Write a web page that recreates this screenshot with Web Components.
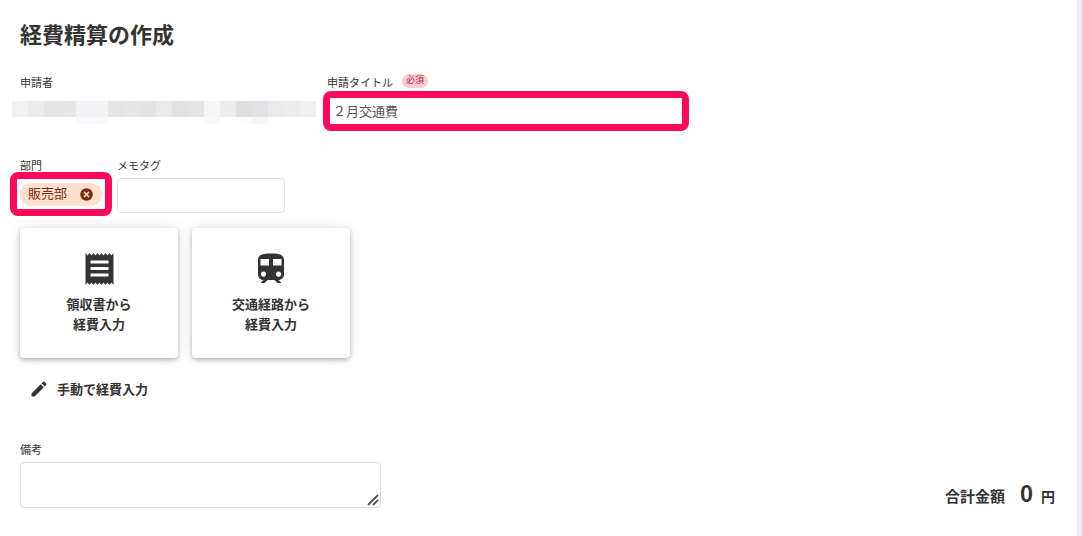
<!DOCTYPE html>
<html lang="ja">
<head>
<meta charset="utf-8">
<meta name="viewport" content="width=device-width, initial-scale=1">
<title>経費精算の作成</title>
<style>
  body { margin: 0; color: #333; background: #e8f1fd; font-family: "Noto Sans CJK JP", sans-serif; font-size: 13px; }
</style>
</head>
<body>
<expense-page></expense-page>
<script>
class BaseElement extends HTMLElement {
  constructor() {
    super();
    this.attachShadow({ mode: 'open' });
  }
  render(css, html) {
    this.shadowRoot.innerHTML = `<style>*{box-sizing:border-box}${css}</style>${html}`;
  }
}

const labelCss = `
  :host { display: flex; flex-direction: column; gap: 5px; min-width: 0; position: relative; }
  label, .label { font-size: 11px; line-height: 16px; white-space: nowrap; }
  .head { display: flex; gap: 9px; height: 16px; }
  input, textarea { display: block; width: 100%; margin: 0; font: inherit; font-size: 13px; color: #555;
    background: #fff; border: 1px solid #e5e4e0; border-radius: 4px; padding: 2px 5px 6px; outline: none; }
  input { height: 35px; }
  textarea { height: 46px; resize: both; border-color: #ddd; }
  textarea::-webkit-resizer { background: transparent; }
  .grip { position: absolute; right: 2px; bottom: 2px; pointer-events: none; }
`;

/* Rounded marker frame drawn over a control */
customElements.define('marker-frame', class extends BaseElement {
  connectedCallback() {
    this.render(`:host { display: block; position: absolute; border: 7px solid #ff0a5a; border-radius: 8px; pointer-events: none; box-sizing: border-box; }`, '');
  }
});

/* Text field with its label; attributes: label, value, required, multiline */
customElements.define('text-field', class extends BaseElement {
  connectedCallback() {
    const value = this.getAttribute('value') || '';
    const control = this.hasAttribute('multiline')
      ? '<textarea id="control"></textarea><svg class="grip" width="12" height="12" viewBox="0 0 12 12" fill="none" stroke="#555" stroke-width="1.8" aria-hidden="true"><path d="M1 11L11 1M6 11l5-5"/></svg>'
      : `<input id="control" type="text" value="${value}">`;
    this.render(labelCss + `
      .badge { align-self: flex-start; height: 14px; padding: 0 4px; border-radius: 7px; background: #f9cdd0; color: #a83246;
        font-size: 9px; line-height: 12px; }
    `, `<div class="head"><label for="control">${this.getAttribute('label')}</label>
      ${this.hasAttribute('required') ? '<span class="badge">必須</span>' : ''}</div>${control}<slot></slot>`);
  }
});

/* Applicant name, hidden behind a mosaic */
customElements.define('masked-name', class extends BaseElement {
  connectedCallback() {
    const top = ['f1f1ef','e9eceb','e5e5e5','e6e6e4','f1f2f6','f2f2f3','e2e5e4','e6e6e4','e4e3e1','e9e9ea','e1e1e2','e4e4e4','f4f7f6','eeecea','dfdfdf','e1e2e5','eaeaea','ececec','f0f0f0'];
    const low = { 4: 'f7f7f7', 5: 'f7f7f7', 12: 'f8f8f8', 14: 'fdfdfd', 15: 'f5f7f7' };
    const cells = top.map(c => `<i style="background:#${c}"></i>`).join('')
      + top.map((_, i) => `<i style="background:#${low[i] || 'fff'}"></i>`).join('');
    this.render(labelCss + `
      .mosaic { position: absolute; left: -8px; top: 27px; display: grid; grid-template-columns: repeat(19, 16px); grid-template-rows: 16px 7px; }
    `, `<div class="label">申請者</div><div class="mosaic" aria-hidden="true">${cells}</div>`);
  }
});

/* Selected department chip */
customElements.define('tag-field', class extends BaseElement {
  connectedCallback() {
    this.render(labelCss + `
      .control { display: flex; align-items: center; height: 35px; padding-bottom: 2px; }
      .chip { display: flex; flex: 1; align-items: center; justify-content: space-between; height: 23px; padding: 0 8px;
        border-radius: 12px; background: #ffe0d0; color: #7a2e0c; }
      .text { line-height: 20px; padding-bottom: 3px; }
      button { display: block; padding: 0; border: 0; background: none; color: inherit; }
      svg { display: block; }
    `, `<div class="label">部門</div>
      <div class="control"><span class="chip"><span class="text"><slot></slot></span>
        <button type="button" aria-label="削除"><svg width="15" height="15" viewBox="0 0 24 24"><path fill="currentColor" d="M12 2C6.47 2 2 6.47 2 12s4.47 10 10 10 10-4.47 10-10S17.53 2 12 2z"/><path d="M8 8l8 8M16 8l-8 8" stroke="#ffe0d0" stroke-width="2.6"/></svg></button>
      </span></div><slot name="marker"></slot>`);
  }
});

/* Large entry card: icon in a slot, two lines of caption */
customElements.define('entry-card', class extends BaseElement {
  connectedCallback() {
    this.render(`
      :host { display: block; }
      button { display: flex; flex-direction: column; align-items: center; justify-content: center; gap: 9px;
        width: 100%; height: 130px; padding: 0; border: 0; border-radius: 4px; background: #fff; color: #333;
        font: inherit; font-weight: 700; line-height: 20px; box-shadow: 0 2px 4px rgba(0,0,0,.26), 0 0 14px rgba(0,0,0,.1); }
    `, `<button type="button"><slot name="icon"></slot><span><slot></slot></span></button>`);
  }
});

customElements.define('manual-entry', class extends BaseElement {
  connectedCallback() {
    this.render(`
      :host { display: flex; }
      button { display: flex; align-items: center; gap: 8px; height: 32px; padding: 0 9px; border: 0; background: none; color: #333;
        font: inherit; font-weight: 700; line-height: 20px; }
    `, `<button type="button"><svg width="20" height="20" viewBox="0 0 24 24" fill="currentColor"><path d="M3 17.25V21h3.75L17.81 9.94l-3.75-3.75L3 17.25zM20.71 7.04a1 1 0 0 0 0-1.41l-2.34-2.34a1 1 0 0 0-1.41 0l-1.83 1.83 3.75 3.75 1.83-1.83z"/></svg><slot></slot></button>`);
  }
});

customElements.define('total-amount', class extends BaseElement {
  connectedCallback() {
    this.render(`
      :host { display: flex; align-items: baseline; font-weight: 700; font-size: 15px; line-height: 24px; white-space: nowrap; }
      .num { font-size: 22px; margin: 0 8px 0 15px; }
      .unit { font-size: 14px; }
    `, `<span>合計金額</span><span class="num"><slot></slot></span><span class="unit">円</span>`);
  }
});

customElements.define('expense-page', class extends BaseElement {
  connectedCallback() {
    this.render(`
      :host { display: block; padding-right: 5px; }
      main { min-height: 100vh; padding: 19px 22px 20px 20px; background: #fff; }
      h1 { margin: 0 0 27px; font-size: 22px; line-height: 28px; font-weight: 700; }
      .row { display: flex; gap: 15px; }
      .top { margin-bottom: 27px; }
      .name { flex: 0 1 292px; }
      .title { flex: 0 1 360px; }
      .dept { flex: 0 0 82px; }
      .memo { flex: 0 1 168px; }
      .title marker-frame { inset: 17px -2px -1px -4px; }
      .dept marker-frame { inset: 15px -10px -3px -10px; }
      .cards { gap: 14px; margin: 15px 0; }
      entry-card { flex: 0 1 158px; }
      manual-entry { margin-bottom: 36px; }
      .foot { justify-content: space-between; align-items: flex-end; }
      .note { flex: 0 1 361px; }
    `, `<main>
      <h1>経費精算の作成</h1>
      <div class="row top">
        <masked-name class="name"></masked-name>
        <text-field class="title" label="申請タイトル" value="２月交通費" required><marker-frame></marker-frame></text-field>
      </div>
      <div class="row">
        <tag-field class="dept">販売部<marker-frame slot="marker"></marker-frame></tag-field>
        <text-field class="memo" label="メモタグ"></text-field>
      </div>
      <div class="row cards">
        <entry-card><svg slot="icon" width="29" height="32" viewBox="0 0 28 32" fill="currentColor" fill-rule="evenodd"><path d="M0 0l2 2.500L4 0l2 2.500L8 0l2 2.500L12 0l2 2.500L16 0l2 2.500L20 0l2 2.500L24 0l2 2.500L28 0v32l-2-2.500L24 32l-2-2.500L20 32l-2-2.500L16 32l-2-2.500L12 32l-2-2.500L8 32l-2-2.500L4 32l-2-2.500L0 32zM5 7.500v3h18v-3zM5 14v3h18v-3zM5 20.500v3h18v-3z"/></svg>領収書から<br>経費入力</entry-card>
        <entry-card><svg slot="icon" width="26" height="32" viewBox="0 0 26 32" fill="currentColor" fill-rule="evenodd"><path d="M13 0.500C5 0.500 0 1.500 0 7V21.500c0 3 2.500 5.500 5.500 5.500L3 29.500v.5h3.500l3-3h7l3 3H23v-.5L20.500 27c3 0 5.500-2.500 5.500-5.500V7c0-5.500-5-6.500-13-6.500zM2.500 6H11v6.500H2.500zM15 6h8.500v6.500H15zM5.500 18.500a2.600 2.600 0 1 0 .01 0zM20.500 18.500a2.600 2.600 0 1 0 .01 0z"/></svg>交通経路から<br>経費入力</entry-card>
      </div>
      <manual-entry>手動で経費入力</manual-entry>
      <div class="row foot">
        <text-field class="note" label="備考" multiline></text-field>
        <total-amount>0</total-amount>
      </div>
    </main>`);
  }
});
</script>
</body>
</html>
